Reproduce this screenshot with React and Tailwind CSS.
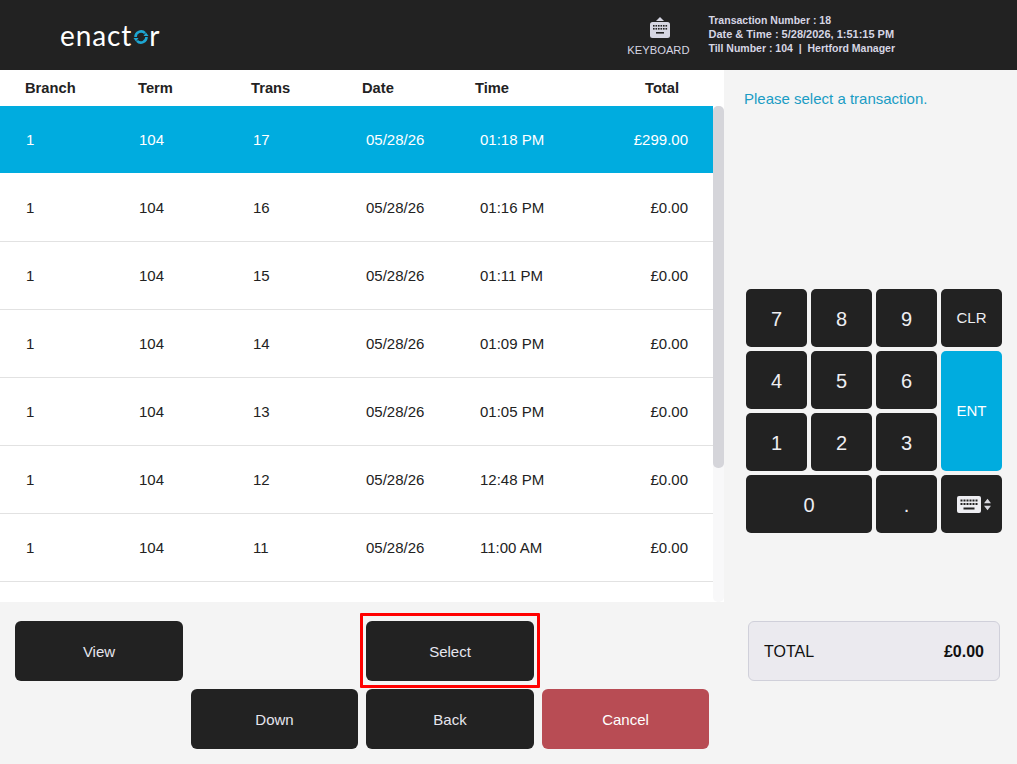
const rows = [
  ["1", "104", "17", "05/28/26", "01:18 PM", "£299.00"],
  ["1", "104", "16", "05/28/26", "01:16 PM", "£0.00"],
  ["1", "104", "15", "05/28/26", "01:11 PM", "£0.00"],
  ["1", "104", "14", "05/28/26", "01:09 PM", "£0.00"],
  ["1", "104", "13", "05/28/26", "01:05 PM", "£0.00"],
  ["1", "104", "12", "05/28/26", "12:48 PM", "£0.00"],
  ["1", "104", "11", "05/28/26", "11:00 AM", "£0.00"],
];

function Key({ children, className = "", tone = "bg-[#222222] text-[#eeeef2]" }) {
  return (
    <button className={`flex items-center justify-center rounded-[5px] pt-px ${tone} ${className}`}>
      {children}
    </button>
  );
}

function KeyboardIcon({ className = "" }) {
  return (
    <svg viewBox="0 0 24 17" className={className}>
      <rect x="0" y="0" width="24" height="17" rx="2" fill="currentColor" />
      <g fill="#222222">
        {[4, 7, 10, 13, 16, 19].map((x) => (
          <rect key={`a${x}`} x={x - 0.5} y="3.5" width="2" height="2" />
        ))}
        {[4, 7, 10, 13, 16, 19].map((x) => (
          <rect key={`b${x}`} x={x - 0.5} y="7" width="2" height="2" />
        ))}
        <rect x="6.5" y="11.5" width="11" height="2" />
      </g>
    </svg>
  );
}

function Action({ children, className = "", tone = "bg-[#222222] text-[#e6e6ee]" }) {
  return (
    <button className={`relative flex h-[60px] items-center justify-center rounded-[6px] pt-[2px] text-[15px] ${tone} ${className}`}>
      {children}
    </button>
  );
}

export default function App() {
  return (
    <div className="flex h-[764px] flex-col overflow-hidden bg-[#f4f4f4] font-['Liberation_Sans',Arial,sans-serif]">
      <header className="flex h-[70px] shrink-0 items-center bg-[#222222]">
        <div className="ml-[60px] flex items-center text-[28px] leading-none tracking-[0.9px] text-white font-['Lato',sans-serif]">
          <span>enact</span>
          <svg viewBox="0 0 16 16" className="mx-[0.5px] mt-[4px] h-[16px] w-[16px]">
            <path d="M2.5 8a5.5 5.5 0 0 1 9.5-3.8" fill="none" stroke="#1ea7d3" strokeWidth="2.6" />
            <path d="M13.5 8a5.5 5.5 0 0 1-9.5 3.8" fill="none" stroke="#1ea7d3" strokeWidth="2.6" />
            <path d="M10.5 7h5l-2.5-3.5z" fill="#1ea7d3" />
            <path d="M0.5 9h5l-2.5 3.5z" fill="#1ea7d3" />
          </svg>
          <span>r</span>
        </div>
        <div className="ml-auto flex w-[64px] flex-col items-center pt-[4px] text-[#d6d6e2]">
          <svg viewBox="0 0 20 21" className="mb-[7px] ml-[3px] h-[21px] w-[20px]">
            <path d="M10 0l4 4H6z" fill="currentColor" />
            <rect x="0" y="5" width="20" height="16" rx="2.5" fill="currentColor" />
            <g fill="#222222">
              {[3, 5.5, 8, 10.5, 13, 15.5].map((x) => (
                <rect key={`c${x}`} x={x} y="8" width="1.6" height="1.6" />
              ))}
              {[3, 5.5, 8, 10.5, 13, 15.5].map((x) => (
                <rect key={`d${x}`} x={x} y="11" width="1.6" height="1.6" />
              ))}
              <rect x="6" y="15" width="8" height="1.6" />
            </g>
          </svg>
          <span className="text-[11.2px] leading-none">KEYBOARD</span>
        </div>
        <div className="mr-[122px] mb-[2px] ml-[18px] text-[10.5px] leading-[14px] font-bold text-[#d6d6e4]">
          <div>Transaction Number : 18</div>
          <div className="text-[11px]">Date &amp; Time : 5/28/2026, 1:51:15 PM</div>
          <div>Till Number : 104&nbsp; |&nbsp; Hertford Manager</div>
        </div>
      </header>

      <div className="flex min-h-0 flex-1">
        <div className="flex w-[724px] shrink-0 flex-col">
          <div className="grid h-[36px] shrink-0 grid-cols-[113px_113px_111px_113px_1fr_auto] items-center bg-white pr-[45px] pl-[25px] text-[14.7px] font-bold text-[#222222]">
            <span>Branch</span>
            <span>Term</span>
            <span>Trans</span>
            <span>Date</span>
            <span>Time</span>
            <span className="text-right">Total</span>
          </div>
          <div className="flex h-[496px] shrink-0 overflow-hidden bg-white">
            <div className="h-full w-[713px] shrink-0 overflow-hidden">
              {rows.map((r, i) => (
                <div key={r[2]} className="h-[68px] border-b border-[#e2e2e2] first:border-white">
                  <div
                    className={`grid h-[67px] grid-cols-[113px_114px_113px_114px_1fr_auto] items-center pt-[2px] pr-[25px] pl-[26px] text-[15px] ${
                      i === 0 ? "bg-[#00acdf] text-white" : "text-[#222222]"
                    }`}
                  >
                    <span>{r[0]}</span>
                    <span>{r[1]}</span>
                    <span>{r[2]}</span>
                    <span>{r[3]}</span>
                    <span>{r[4]}</span>
                    <span className="text-right">{r[5]}</span>
                  </div>
                </div>
              ))}
            </div>
            <div className="h-full w-[11px] shrink-0 rounded-[5px] bg-[#f8f8f9]">
              <div className="h-[362px] rounded-[5px] bg-[#d5d5da]" />
            </div>
          </div>
          <div className="grid grid-cols-[168px_167px_168px_167px] grid-rows-[60px_60px] gap-2 pt-[19px] pl-[15px]">
            <Action className="col-start-1 row-start-1">View</Action>
            <Action className="col-start-3 row-start-1">
              Select
              <span className="absolute -top-[8px] -right-[6px] -bottom-[7px] -left-[6px] rounded-[1px] border-[3px] border-[#ff0000]" />
            </Action>
            <Action className="col-start-2 row-start-2">Down</Action>
            <Action className="col-start-3 row-start-2">Back</Action>
            <Action className="col-start-4 row-start-2" tone="bg-[#b84c54] text-white">Cancel</Action>
          </div>
        </div>

        <div className="flex flex-1 flex-col">
          <p className="mt-[20px] ml-[20px] h-[199px] text-[15px] leading-[18px] text-[#1a9cc4]">Please select a transaction.</p>
          <div className="ml-[22px] grid w-[256px] grid-cols-[61px_61px_61px_61px] grid-rows-[58px_58px_58px_58px] gap-1 text-[20px]">
            <Key>7</Key>
            <Key>8</Key>
            <Key>9</Key>
            <Key className="pt-[2px] text-[15px]">CLR</Key>
            <Key>4</Key>
            <Key>5</Key>
            <Key>6</Key>
            <Key className="row-span-2 text-[15px]" tone="bg-[#00acdf] text-white">ENT</Key>
            <Key>1</Key>
            <Key>2</Key>
            <Key>3</Key>
            <Key className="col-span-2">0</Key>
            <Key>.</Key>
            <Key className="gap-[3px] pl-[4px]">
              <KeyboardIcon className="h-[17px] w-[24px] text-[#eeeef2]" />
              <svg viewBox="0 0 8 13" className="h-[13px] w-[7px] text-[#d8d8de]">
                <path d="M4 0l4 5H0zM4 13l4-5H0z" fill="currentColor" />
              </svg>
            </Key>
          </div>
          <div className="mt-[88px] ml-[24px] flex h-[60px] w-[252px] items-center justify-between rounded-[6px] border border-[#d0d0da] bg-[#ebeaef] pt-[2px] pr-[15px] pl-[15px] text-[16px] text-[#111111]">
            <span>TOTAL</span>
            <span className="font-bold">£0.00</span>
          </div>
        </div>
      </div>
    </div>
  );
}
